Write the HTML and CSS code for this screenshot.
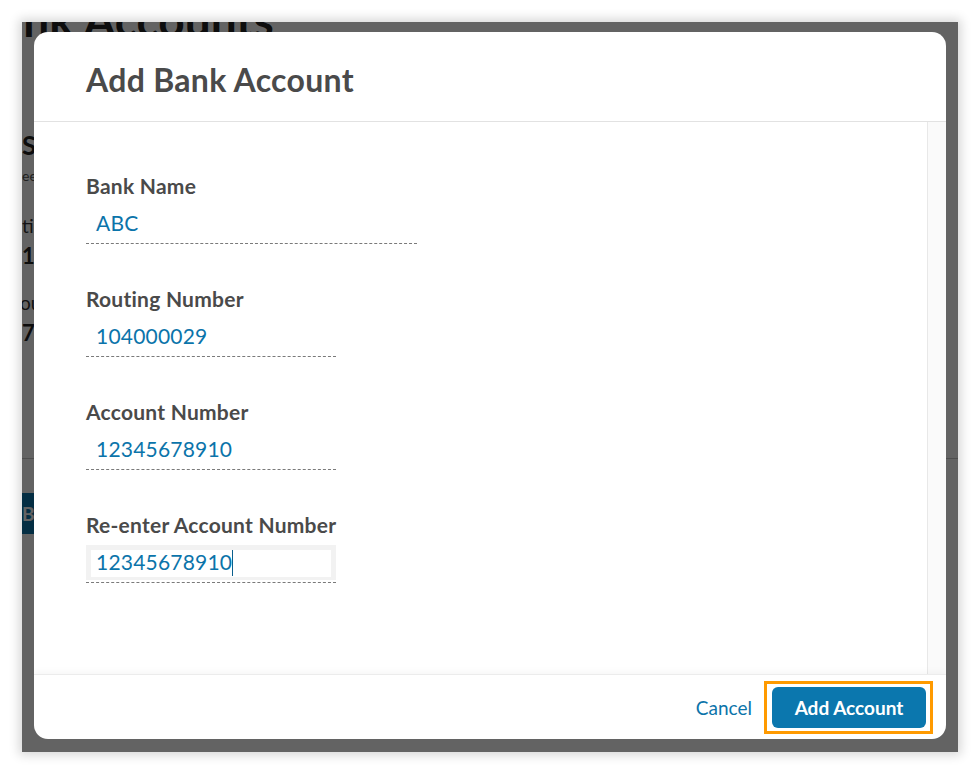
FILE: index.html
```html
<!DOCTYPE html>
<html lang="en">
<head>
<meta charset="utf-8">
<title>Add Bank Account</title>
<link rel="stylesheet" href="styles.css">
</head>
<body>
<div class="frame">
  <div class="page">
    <h1 class="bg-title">Bank Accounts</h1>
    <h2 class="bg-section">Savings</h2>
    <p class="bg-note">eep</p>
    <div class="bg-label">tion</div>
    <div class="bg-value">1</div>
    <div class="bg-label bg-label-2">ou</div>
    <div class="bg-value">7</div>
    <hr class="bg-rule">
    <div class="bg-button">Bank</div>
  </div>
  <div class="overlay"></div>
  <div class="modal" role="dialog" aria-labelledby="modal-title">
    <header class="modal-header">
      <h2 id="modal-title" class="modal-title">Add Bank Account</h2>
    </header>
    <div class="modal-body">
      <div class="modal-content">
        <div class="field">
          <label class="field-label">Bank Name</label>
          <div class="control control-wide">
            <div class="control-box"><div class="control-input">ABC</div></div>
          </div>
        </div>
        <div class="field">
          <label class="field-label">Routing Number</label>
          <div class="control">
            <div class="control-box"><div class="control-input">104000029</div></div>
          </div>
        </div>
        <div class="field">
          <label class="field-label">Account Number</label>
          <div class="control">
            <div class="control-box"><div class="control-input">12345678910</div></div>
          </div>
        </div>
        <div class="field">
          <label class="field-label">Re-enter Account Number</label>
          <div class="control">
            <div class="control-box is-focused"><div class="control-input">12345678910<span class="caret"></span></div></div>
          </div>
        </div>
      </div>
      <div class="scrollbar"></div>
    </div>
    <footer class="modal-footer">
      <a class="btn-cancel" href="#">Cancel</a>
      <span class="focus-ring"><button class="btn-primary" type="button">Add Account</button></span>
    </footer>
  </div>
</div>
</body>
</html>
```
FILE: styles.css
```css
* { box-sizing: border-box; }
html, body { margin: 0; padding: 0; background: #ffffff; }
body {
  font-family: Lato, "Open Sans", "Liberation Sans", sans-serif;
  width: 980px;
  height: 774px;
  overflow: hidden;
}
.frame {
  position: relative;
  margin: 22px 0 0 22px;
  width: 936px;
  height: 730px;
  overflow: hidden;
  background: #ffffff;
  box-shadow: 0 0 10px 3px rgba(0, 0, 0, 0.16);
}

/* background page (mostly hidden behind the modal) */
.page { color: #222; }
.bg-title {
  margin: -24px 0 0 -52px;
  font-size: 46px;
  line-height: 44px;
  font-weight: 700;
  white-space: nowrap;
}
.bg-section {
  margin: 88px 0 0 0;
  font-size: 26px;
  line-height: 30px;
  font-weight: 700;
}
.bg-note {
  margin: 6px 0 0 0;
  font-size: 14px;
  line-height: 20px;
  color: #555;
}
.bg-label {
  margin: 28px 0 0 0;
  font-size: 19px;
  line-height: 24px;
  color: #333;
}
.bg-label-2 { margin-top: 22px; margin-left: -2px; }
.bg-value {
  margin: 5px 0 0 0;
  font-size: 22px;
  line-height: 26px;
  font-weight: 700;
}
.bg-rule {
  margin: 112px 0 0 0;
  border: 0;
  border-top: 1px solid #c8c8c8;
}
.bg-button {
  margin: 34px 0 0 -12px;
  width: 200px;
  height: 41px;
  padding: 0 12px;
  line-height: 41px;
  background: #0b77ae;
  color: #fff;
  font-weight: 700;
  font-size: 19px;
  border-radius: 5px;
}
.overlay {
  position: absolute;
  inset: 0;
  background: rgba(0, 0, 0, 0.61);
}

/* modal */
.modal {
  position: absolute;
  left: 12px;
  top: 10px;
  width: 912px;
  height: 707px;
  background: #ffffff;
  border-radius: 14px;
  overflow: hidden;
  display: flex;
  flex-direction: column;
}
.modal-header {
  height: 90px;
  flex: none;
  padding: 29px 0 0 52px;
  border-bottom: 1px solid #e2e2e2;
}
.modal-title {
  margin: 0;
  font-size: 32px;
  line-height: 38px;
  font-weight: 700;
  letter-spacing: 0.3px;
  color: #4a4a4a;
}
.modal-body {
  flex: 1;
  display: flex;
  min-height: 0;
}
.modal-content {
  flex: 1;
  padding: 51px 0 0 52px;
}
.scrollbar {
  width: 19px;
  flex: none;
  background: #fafafa;
  border-left: 1px solid #e8e8e8;
}
.field { margin-bottom: 42px; }
.field-label {
  display: block;
  font-size: 21px;
  line-height: 26px;
  font-weight: 700;
  letter-spacing: 0.25px;
  color: #4a4a4a;
}
.control {
  width: 250px;
  margin-top: 7px;
  padding-bottom: 2px;
  border-bottom: 1px dashed #7a7a7a;
}
.control-wide { width: 331px; }
.control-box { padding: 5px 5px 3px 5px; }
.control-box.is-focused { background: #f2f2f2; }
.control-input {
  height: 27px;
  padding-left: 5px;
  background: #ffffff;
  font-size: 21px;
  line-height: 24px;
  letter-spacing: 0.2px;
  color: #0b74aa;
  white-space: nowrap;
}
.caret {
  display: inline-block;
  width: 1px;
  height: 26px;
  margin-left: 0;
  vertical-align: -6px;
  background: #0b5f8c;
}

.modal-footer {
  height: 65px;
  flex: none;
  display: flex;
  align-items: center;
  justify-content: flex-end;
  gap: 12px;
  padding-right: 13px;
  border-top: 1px solid #ececec;
  box-shadow: 0 -3px 6px rgba(0, 0, 0, 0.03);
}
.btn-cancel {
  font-size: 19px;
  color: #0b74aa;
  text-decoration: none;
}
.focus-ring {
  display: flex;
  border: 3px solid #ff9a00;
  padding: 3px 4px 3px 5px;
}
.btn-primary {
  width: 154px;
  height: 41px;
  border: 0;
  border-radius: 6px;
  background: #0b77ae;
  color: #ffffff;
  font-family: inherit;
  font-size: 19px;
  font-weight: 700;
  cursor: pointer;
}
```
